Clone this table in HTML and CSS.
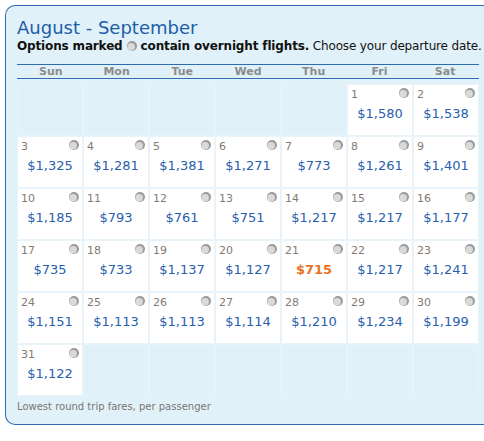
FILE: index.html
```html
<!DOCTYPE html>
<html>
<head>
<meta charset="utf-8">
<link rel="stylesheet" href="styles.css">
</head>
<body>
<div class="panel">
  <h1 class="title">August - September</h1>
  <p class="note"><b>Options marked <svg class="moon-inline" viewBox="0 0 10 10"><circle cx="5" cy="5" r="5" fill="#9c9c9c"/><circle cx="4.2" cy="5.8" r="3.7" fill="#dadada"/></svg> contain overnight flights.</b> Choose your departure date.</p>
  <div class="days">
    <span>Sun</span><span>Mon</span><span>Tue</span><span>Wed</span><span>Thu</span><span>Fri</span><span>Sat</span>
  </div>
  <div class="grid">
    <div class="cell empty"></div>
    <div class="cell empty"></div>
    <div class="cell empty"></div>
    <div class="cell empty"></div>
    <div class="cell empty"></div>
    <div class="cell"><span class="num">1</span><svg class="moon" viewBox="0 0 10 10"><circle cx="5" cy="5" r="5" fill="#9c9c9c"/><circle cx="4.2" cy="5.8" r="3.7" fill="#dadada"/></svg><span class="price">$1,580</span></div>
    <div class="cell"><span class="num">2</span><svg class="moon" viewBox="0 0 10 10"><circle cx="5" cy="5" r="5" fill="#9c9c9c"/><circle cx="4.2" cy="5.8" r="3.7" fill="#dadada"/></svg><span class="price">$1,538</span></div>

    <div class="cell"><span class="num">3</span><svg class="moon" viewBox="0 0 10 10"><circle cx="5" cy="5" r="5" fill="#9c9c9c"/><circle cx="4.2" cy="5.8" r="3.7" fill="#dadada"/></svg><span class="price">$1,325</span></div>
    <div class="cell"><span class="num">4</span><svg class="moon" viewBox="0 0 10 10"><circle cx="5" cy="5" r="5" fill="#9c9c9c"/><circle cx="4.2" cy="5.8" r="3.7" fill="#dadada"/></svg><span class="price">$1,281</span></div>
    <div class="cell"><span class="num">5</span><svg class="moon" viewBox="0 0 10 10"><circle cx="5" cy="5" r="5" fill="#9c9c9c"/><circle cx="4.2" cy="5.8" r="3.7" fill="#dadada"/></svg><span class="price">$1,381</span></div>
    <div class="cell"><span class="num">6</span><svg class="moon" viewBox="0 0 10 10"><circle cx="5" cy="5" r="5" fill="#9c9c9c"/><circle cx="4.2" cy="5.8" r="3.7" fill="#dadada"/></svg><span class="price">$1,271</span></div>
    <div class="cell"><span class="num">7</span><svg class="moon" viewBox="0 0 10 10"><circle cx="5" cy="5" r="5" fill="#9c9c9c"/><circle cx="4.2" cy="5.8" r="3.7" fill="#dadada"/></svg><span class="price">$773</span></div>
    <div class="cell"><span class="num">8</span><svg class="moon" viewBox="0 0 10 10"><circle cx="5" cy="5" r="5" fill="#9c9c9c"/><circle cx="4.2" cy="5.8" r="3.7" fill="#dadada"/></svg><span class="price">$1,261</span></div>
    <div class="cell"><span class="num">9</span><svg class="moon" viewBox="0 0 10 10"><circle cx="5" cy="5" r="5" fill="#9c9c9c"/><circle cx="4.2" cy="5.8" r="3.7" fill="#dadada"/></svg><span class="price">$1,401</span></div>

    <div class="cell"><span class="num">10</span><svg class="moon" viewBox="0 0 10 10"><circle cx="5" cy="5" r="5" fill="#9c9c9c"/><circle cx="4.2" cy="5.8" r="3.7" fill="#dadada"/></svg><span class="price">$1,185</span></div>
    <div class="cell"><span class="num">11</span><svg class="moon" viewBox="0 0 10 10"><circle cx="5" cy="5" r="5" fill="#9c9c9c"/><circle cx="4.2" cy="5.8" r="3.7" fill="#dadada"/></svg><span class="price">$793</span></div>
    <div class="cell"><span class="num">12</span><svg class="moon" viewBox="0 0 10 10"><circle cx="5" cy="5" r="5" fill="#9c9c9c"/><circle cx="4.2" cy="5.8" r="3.7" fill="#dadada"/></svg><span class="price">$761</span></div>
    <div class="cell"><span class="num">13</span><svg class="moon" viewBox="0 0 10 10"><circle cx="5" cy="5" r="5" fill="#9c9c9c"/><circle cx="4.2" cy="5.8" r="3.7" fill="#dadada"/></svg><span class="price">$751</span></div>
    <div class="cell"><span class="num">14</span><svg class="moon" viewBox="0 0 10 10"><circle cx="5" cy="5" r="5" fill="#9c9c9c"/><circle cx="4.2" cy="5.8" r="3.7" fill="#dadada"/></svg><span class="price">$1,217</span></div>
    <div class="cell"><span class="num">15</span><svg class="moon" viewBox="0 0 10 10"><circle cx="5" cy="5" r="5" fill="#9c9c9c"/><circle cx="4.2" cy="5.8" r="3.7" fill="#dadada"/></svg><span class="price">$1,217</span></div>
    <div class="cell"><span class="num">16</span><svg class="moon" viewBox="0 0 10 10"><circle cx="5" cy="5" r="5" fill="#9c9c9c"/><circle cx="4.2" cy="5.8" r="3.7" fill="#dadada"/></svg><span class="price">$1,177</span></div>

    <div class="cell"><span class="num">17</span><svg class="moon" viewBox="0 0 10 10"><circle cx="5" cy="5" r="5" fill="#9c9c9c"/><circle cx="4.2" cy="5.8" r="3.7" fill="#dadada"/></svg><span class="price">$735</span></div>
    <div class="cell"><span class="num">18</span><svg class="moon" viewBox="0 0 10 10"><circle cx="5" cy="5" r="5" fill="#9c9c9c"/><circle cx="4.2" cy="5.8" r="3.7" fill="#dadada"/></svg><span class="price">$733</span></div>
    <div class="cell"><span class="num">19</span><svg class="moon" viewBox="0 0 10 10"><circle cx="5" cy="5" r="5" fill="#9c9c9c"/><circle cx="4.2" cy="5.8" r="3.7" fill="#dadada"/></svg><span class="price">$1,137</span></div>
    <div class="cell"><span class="num">20</span><svg class="moon" viewBox="0 0 10 10"><circle cx="5" cy="5" r="5" fill="#9c9c9c"/><circle cx="4.2" cy="5.8" r="3.7" fill="#dadada"/></svg><span class="price">$1,127</span></div>
    <div class="cell"><span class="num">21</span><svg class="moon" viewBox="0 0 10 10"><circle cx="5" cy="5" r="5" fill="#9c9c9c"/><circle cx="4.2" cy="5.8" r="3.7" fill="#dadada"/></svg><span class="price lowest">$715</span></div>
    <div class="cell"><span class="num">22</span><svg class="moon" viewBox="0 0 10 10"><circle cx="5" cy="5" r="5" fill="#9c9c9c"/><circle cx="4.2" cy="5.8" r="3.7" fill="#dadada"/></svg><span class="price">$1,217</span></div>
    <div class="cell"><span class="num">23</span><svg class="moon" viewBox="0 0 10 10"><circle cx="5" cy="5" r="5" fill="#9c9c9c"/><circle cx="4.2" cy="5.8" r="3.7" fill="#dadada"/></svg><span class="price">$1,241</span></div>

    <div class="cell"><span class="num">24</span><svg class="moon" viewBox="0 0 10 10"><circle cx="5" cy="5" r="5" fill="#9c9c9c"/><circle cx="4.2" cy="5.8" r="3.7" fill="#dadada"/></svg><span class="price">$1,151</span></div>
    <div class="cell"><span class="num">25</span><svg class="moon" viewBox="0 0 10 10"><circle cx="5" cy="5" r="5" fill="#9c9c9c"/><circle cx="4.2" cy="5.8" r="3.7" fill="#dadada"/></svg><span class="price">$1,113</span></div>
    <div class="cell"><span class="num">26</span><svg class="moon" viewBox="0 0 10 10"><circle cx="5" cy="5" r="5" fill="#9c9c9c"/><circle cx="4.2" cy="5.8" r="3.7" fill="#dadada"/></svg><span class="price">$1,113</span></div>
    <div class="cell"><span class="num">27</span><svg class="moon" viewBox="0 0 10 10"><circle cx="5" cy="5" r="5" fill="#9c9c9c"/><circle cx="4.2" cy="5.8" r="3.7" fill="#dadada"/></svg><span class="price">$1,114</span></div>
    <div class="cell"><span class="num">28</span><svg class="moon" viewBox="0 0 10 10"><circle cx="5" cy="5" r="5" fill="#9c9c9c"/><circle cx="4.2" cy="5.8" r="3.7" fill="#dadada"/></svg><span class="price">$1,210</span></div>
    <div class="cell"><span class="num">29</span><svg class="moon" viewBox="0 0 10 10"><circle cx="5" cy="5" r="5" fill="#9c9c9c"/><circle cx="4.2" cy="5.8" r="3.7" fill="#dadada"/></svg><span class="price">$1,234</span></div>
    <div class="cell"><span class="num">30</span><svg class="moon" viewBox="0 0 10 10"><circle cx="5" cy="5" r="5" fill="#9c9c9c"/><circle cx="4.2" cy="5.8" r="3.7" fill="#dadada"/></svg><span class="price">$1,199</span></div>

    <div class="cell"><span class="num">31</span><svg class="moon" viewBox="0 0 10 10"><circle cx="5" cy="5" r="5" fill="#9c9c9c"/><circle cx="4.2" cy="5.8" r="3.7" fill="#dadada"/></svg><span class="price">$1,122</span></div>
    <div class="cell empty"></div>
    <div class="cell empty"></div>
    <div class="cell empty"></div>
    <div class="cell empty"></div>
    <div class="cell empty"></div>
    <div class="cell empty"></div>
  </div>
  <p class="footer">Lowest round trip fares, per passenger</p>
</div>
</body>
</html>
```

FILE: styles.css
```css
html, body {
  margin: 0;
  padding: 0;
  background: #ffffff;
}

body {
  font-family: "DejaVu Sans", Verdana, sans-serif;
}

.panel {
  margin: 5px 0 0 5px;
  width: 479px;
  box-sizing: border-box;
  border: 1px solid #2f6bb0;
  border-right: 0;
  border-radius: 10px 0 0 10px;
  background: #e1f1f9;
  padding: 11px 0 10px 11px;
}

.title {
  margin: 0;
  font-size: 18px;
  line-height: 22px;
  font-weight: normal;
  color: #1d5ea9;
}

.note {
  margin: 0;
  font-size: 12px;
  line-height: 15px;
  color: #111111;
  white-space: nowrap;
  letter-spacing: -0.15px;
}

.note b {
  font-weight: bold;
}

.moon-inline {
  width: 10px;
  height: 10px;
  vertical-align: -1px;
}

.days {
  width: 462px;
  margin-top: 10px;
  border-top: 1px solid #2f6bb0;
  border-bottom: 1px solid #2f6bb0;
  display: grid;
  grid-template-columns: repeat(7, 1fr);
  padding: 0 1px;
  box-sizing: border-box;
}

.days span {
  text-align: center;
  font-size: 11px;
  line-height: 13px;
  font-weight: bold;
  color: #8c8c8c;
}

.grid {
  width: 462px;
  box-sizing: border-box;
  margin-top: 6px;
  padding: 0 1px;
  display: grid;
  grid-template-columns: repeat(7, 64px);
  grid-auto-rows: 50px;
  gap: 2px;
}

.cell {
  position: relative;
  background: #ffffff;
  box-shadow: 0 0 0 1px #e9f4fa;
  padding: 3px 3px 0 3px;
  box-sizing: border-box;
  display: flex;
  flex-direction: column;
}

.cell.empty {
  background: #e1f1f9;
  box-shadow: 0 0 0 1px #e8f4fa;
}

.num {
  font-size: 11px;
  line-height: 13px;
  color: #857a72;
}

.moon {
  position: absolute;
  top: 3px;
  right: 3px;
  width: 10px;
  height: 10px;
}

.price {
  margin-top: 5px;
  text-align: center;
  font-size: 13px;
  line-height: 16px;
  color: #2860ad;
}

.price.lowest {
  color: #e8731e;
  font-weight: bold;
}

.footer {
  margin: 5px 0 0 0;
  font-size: 10px;
  line-height: 14px;
  color: #7a7572;
}
```
